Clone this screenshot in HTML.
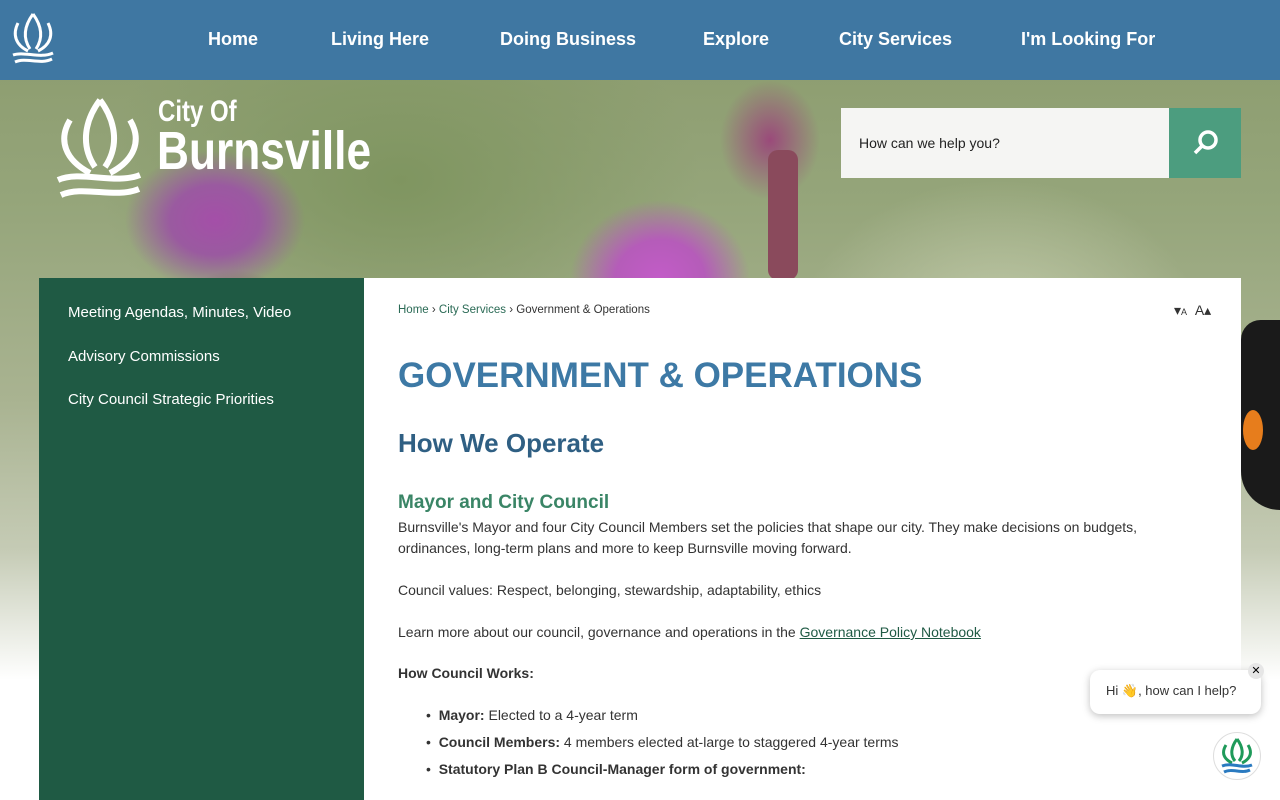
<!DOCTYPE html>
<html><head><meta charset="utf-8"><style>
*{margin:0;padding:0;box-sizing:border-box}
body{width:1280px;height:800px;overflow:hidden;font-family:"Liberation Sans",sans-serif;position:relative;
background:linear-gradient(180deg,#8a9a6c 0px,#95a57a 200px,#a9b391 400px,#c5cbb5 550px,#fff 680px)}
.bg{position:absolute;left:0;top:80px;width:1280px;height:620px;
background:
radial-gradient(ellipse 90px 70px at 215px 140px,#a44fa8 0,#9a5aa0 50%,transparent 100%),
radial-gradient(ellipse 60px 50px at 235px 240px,#6b3e4b 0,transparent 100%),
radial-gradient(ellipse 90px 80px at 660px 200px,#c35cc8 0,#b55cb9 50%,transparent 100%),
radial-gradient(ellipse 50px 60px at 770px 60px,#9a4a7a 0,transparent 100%),
radial-gradient(ellipse 200px 150px at 1000px 250px,#c0c9a8 0,transparent 100%),
radial-gradient(ellipse 300px 200px at 400px 100px,#7f9560 0,transparent 100%);}
.stem{position:absolute;left:768px;top:150px;width:30px;height:130px;background:#8a4a5c;border-radius:10px}
.bfly{position:absolute;left:1241px;top:320px;width:39px;height:190px;background:#1a1a1a;border-radius:30px 0 0 60px}
.bfly i{position:absolute;left:2px;top:90px;width:20px;height:40px;background:#e77d1c;border-radius:50%}
.nav{position:absolute;top:0;left:0;width:1280px;height:80px;background:#3f77a2}
.nav a{position:absolute;top:29px;color:#fff;font-weight:bold;font-size:18px;text-decoration:none}
.search{position:absolute;left:841px;top:108px;width:328px;height:70px;background:#f5f5f3;font-size:14px;color:#222;padding:27px 0 0 18px}
.sbtn{position:absolute;left:1169px;top:108px;width:72px;height:70px;background:#4c9d7f}
.side{position:absolute;left:39px;top:278px;width:325px;height:522px;background:#1f5a44}
.side div{color:#fff;font-size:15px;position:absolute;left:29px}
.main{position:absolute;left:364px;top:278px;width:877px;height:522px;background:#fff;color:#333}
.main p{position:absolute;left:34px;font-size:14px;line-height:21px}
.bc{font-size:11.5px!important;color:#333}
.bc span{color:#2a6a55}
h1{position:absolute;left:34px;top:78px;font-size:35px;color:#3d79a5;font-weight:bold}
h2{position:absolute;left:34px;top:150px;font-size:26px;color:#2f5f83;font-weight:bold}
h3{position:absolute;left:34px;top:214px;font-size:19px;color:#3a8566;font-weight:bold}
a.u{color:#1f5a44;text-decoration:underline}
.chat{position:absolute;left:1090px;top:670px;width:171px;height:44px;background:#fff;border-radius:10px;box-shadow:0 2px 8px rgba(0,0,0,.25);font-size:13px;color:#333;padding:13px 0 0 16px}
.x{position:absolute;left:1248px;top:663px;width:16px;height:16px;border-radius:50%;background:#e6e6e6;font-size:11px;text-align:center;line-height:16px}
.bot{position:absolute;left:1213px;top:732px;width:48px;height:48px;border-radius:50%;background:#fff;border:1px solid #ddd}
</style></head><body>
<div class="bg"></div><div class="stem"></div><div class="bfly"><i></i></div>
<div class="nav">
<svg style="position:absolute;left:10px;top:11px" width="46" height="58" viewBox="0 0 46 58" fill="none" stroke="#fff" stroke-width="3"><path d="M23 3 C15 14 12 26 20 38 M23 3 C31 14 34 26 26 38 M8 12 C2 24 6 34 18 40 M38 12 C44 24 40 34 28 40 M3 44 C14 40 30 48 43 42 M5 51 C16 46 30 54 42 48"/></svg>
<a style="left:208px">Home</a><a style="left:331px">Living Here</a><a style="left:500px">Doing Business</a><a style="left:703px">Explore</a><a style="left:839px">City Services</a><a style="left:1021px">I'm Looking For</a>
</div>
<svg style="position:absolute;left:55px;top:95px" width="90" height="110" viewBox="0 0 90 110" fill="none" stroke="#fff" stroke-width="6"><path d="M45 5 C30 25 25 50 40 72 M45 5 C60 25 65 50 50 72 M15 25 C3 45 10 65 35 78 M75 25 C87 45 80 65 55 78 M3 85 C25 75 60 90 85 80 M6 100 C28 90 60 104 84 94"/></svg>
<div style="position:absolute;left:158px;top:97px;color:#fff;font-weight:bold;font-size:30px;line-height:30px;transform:scaleX(.8);transform-origin:left">City Of</div>
<div style="position:absolute;left:157px;top:124px;color:#fff;font-weight:bold;font-size:54px;line-height:54px;transform:scaleX(.82);transform-origin:left">Burnsville</div>
<div class="search">How can we help you?</div>
<div class="sbtn"><svg style="position:absolute;left:23px;top:21px" width="28" height="28" viewBox="0 0 28 28" fill="none" stroke="#fff" stroke-width="3.5"><circle cx="16" cy="11" r="8"/><path d="M10 17 L3 24"/></svg></div>
<div class="side"><div style="top:26px">Meeting Agendas, Minutes, Video</div><div style="top:70px">Advisory Commissions</div><div style="top:113px">City Council Strategic Priorities</div></div>
<div class="main">
<p class="bc" style="top:22px"><span>Home</span> › <span>City Services</span> › Government &amp; Operations</p>
<div style="position:absolute;left:810px;top:24px;font-size:14px;color:#333">▾<small style="font-size:9px">A</small> &nbsp;A▴</div>
<h1>GOVERNMENT &amp; OPERATIONS</h1>
<h2>How We Operate</h2>
<h3>Mayor and City Council</h3>
<p style="top:239px">Burnsville's Mayor and four City Council Members set the policies that shape our city. They make decisions on budgets,<br>ordinances, long-term plans and more to keep Burnsville moving forward.</p>
<p style="top:302px">Council values: Respect, belonging, stewardship, adaptability, ethics</p>
<p style="top:344px">Learn more about our council, governance and operations in the <a class="u">Governance Policy Notebook</a></p>
<p style="top:385px"><b>How Council Works:</b></p>
<p style="top:427px;left:62px">•&nbsp; <b>Mayor:</b> Elected to a 4-year term</p>
<p style="top:454px;left:62px">•&nbsp; <b>Council Members:</b> 4 members elected at-large to staggered 4-year terms</p>
<p style="top:481px;left:62px">•&nbsp; <b>Statutory Plan B Council-Manager form of government:</b></p>
</div>
<div class="chat">Hi 👋, how can I help?</div><div class="x">✕</div>
<div class="bot"><svg width="46" height="46" viewBox="0 0 46 46" fill="none" stroke-width="3"><path stroke="#1f9a5a" d="M23 6 C17 14 16 22 21 28 M23 6 C29 14 30 22 25 28 M12 12 C7 20 10 26 18 30 M34 12 C39 20 36 26 28 30"/><path stroke="#2a7ac0" d="M8 33 C18 29 28 36 38 32 M10 39 C18 35 28 41 36 37"/></svg></div>
</body></html>
